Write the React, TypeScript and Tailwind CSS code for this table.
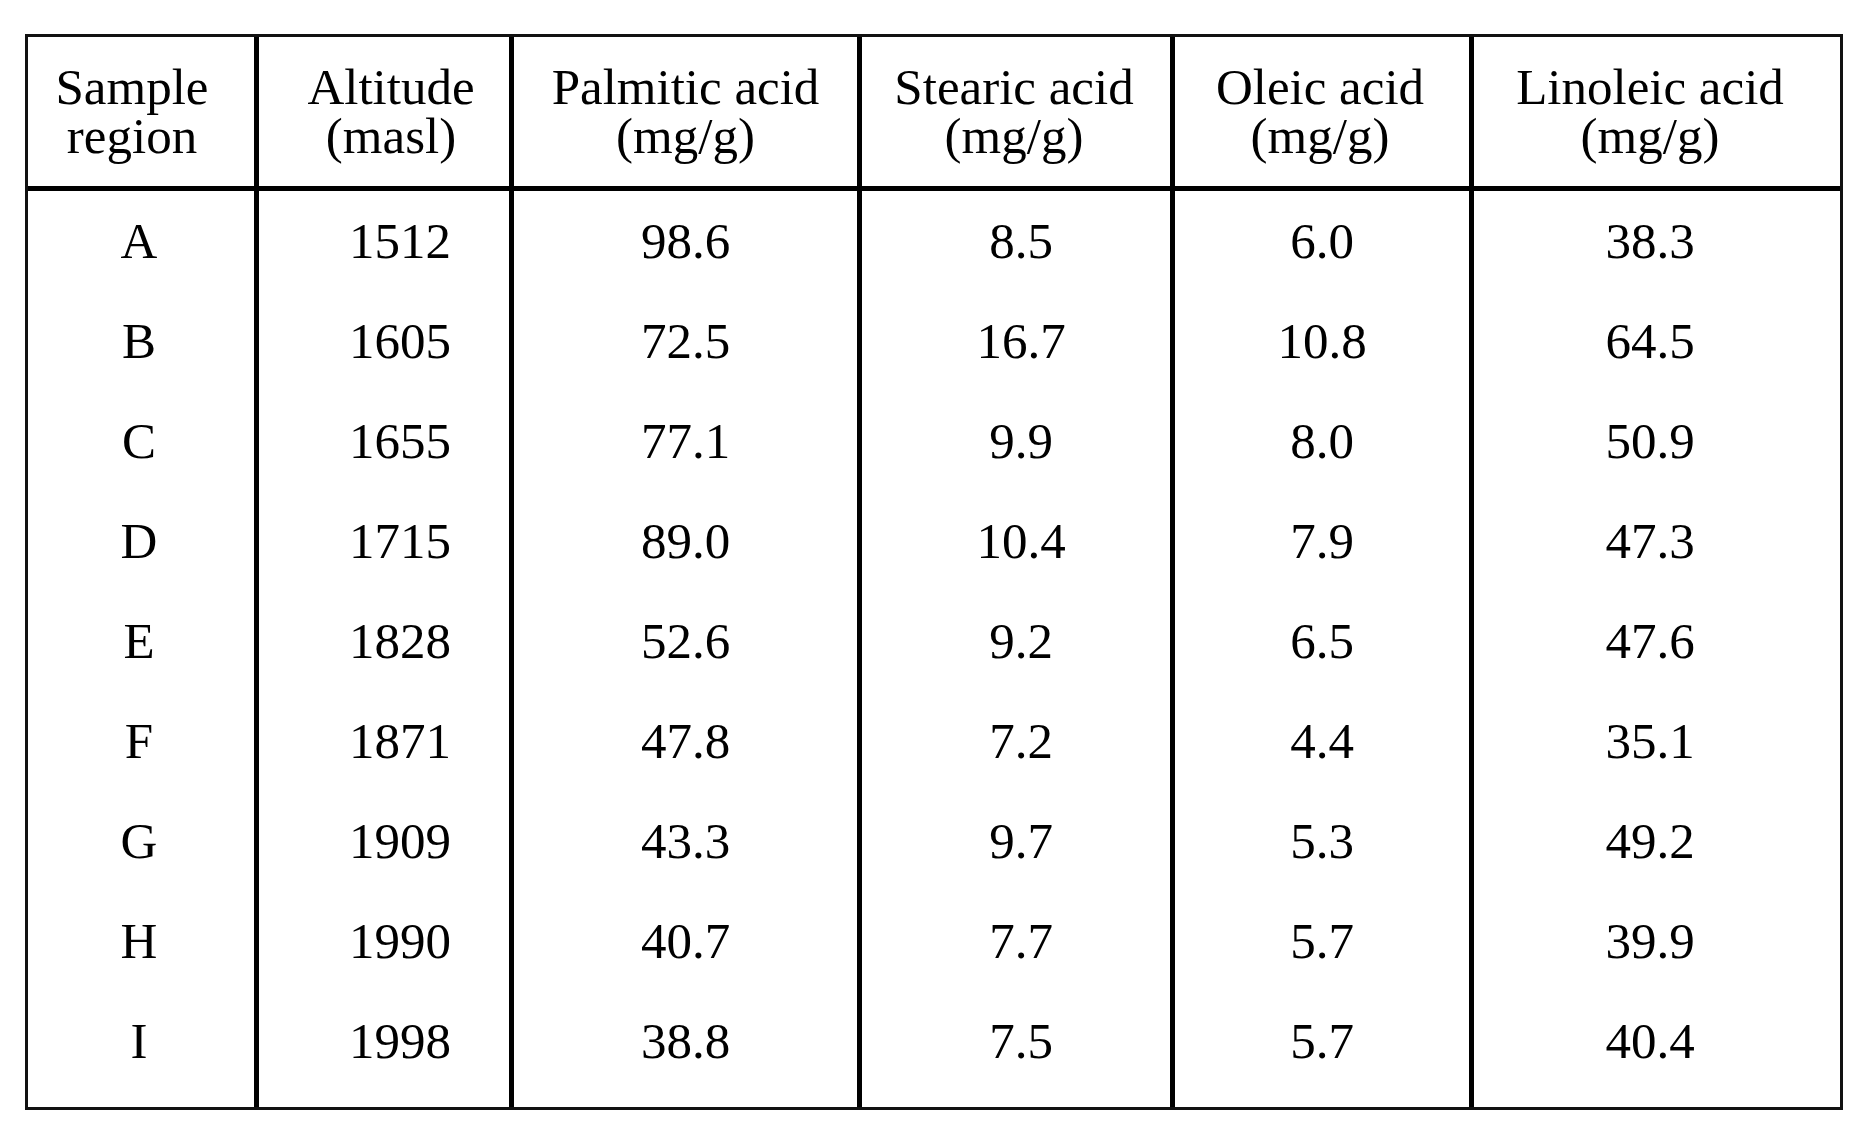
const headers = [
  ["Sample", "region"],
  ["Altitude", "(masl)"],
  ["Palmitic acid", "(mg/g)"],
  ["Stearic acid", "(mg/g)"],
  ["Oleic acid", "(mg/g)"],
  ["Linoleic acid", "(mg/g)"],
];

const rows = [
  ["A", "1512", "98.6", "8.5", "6.0", "38.3"],
  ["B", "1605", "72.5", "16.7", "10.8", "64.5"],
  ["C", "1655", "77.1", "9.9", "8.0", "50.9"],
  ["D", "1715", "89.0", "10.4", "7.9", "47.3"],
  ["E", "1828", "52.6", "9.2", "6.5", "47.6"],
  ["F", "1871", "47.8", "7.2", "4.4", "35.1"],
  ["G", "1909", "43.3", "9.7", "5.3", "49.2"],
  ["H", "1990", "40.7", "7.7", "5.7", "39.9"],
  ["I", "1998", "38.8", "7.5", "5.7", "40.4"],
];

// column widths include the 5px left divider for every column but the first
const cols = ["w-[226px]", "w-[255px]", "w-[348px]", "w-[313px]", "w-[299px]", "w-[371px]"];
const headPad = ["pr-[18px]", "pl-[14px]", "", "pr-[4px]", "pr-[4px]", "pr-[14px]"];
const bodyPad = ["pr-[4px]", "pl-[32px]", "", "pl-[10px]", "", "pr-[14px]"];

export default function App() {
  return (
    <div className="min-h-[1134px] w-[1872px] bg-white pl-[25px] pt-[34px] font-['Liberation_Serif','Times_New_Roman',serif] text-[51px] text-black">
      <div className="flex w-[1818px] flex-col border-[3px] border-[#111]">
        <div className="flex h-[154px] border-b-[5px] border-black">
          {headers.map((h, i) => (
            <div
              key={i}
              className={`${cols[i]} ${headPad[i]} ${i > 0 ? "border-l-[5px] border-black" : ""} flex flex-col items-center justify-center text-center leading-[49px]`}
            >
              <span>{h[0]}</span>
              <span>{h[1]}</span>
            </div>
          ))}
        </div>
        <div className="flex">
          {cols.map((w, i) => (
            <div
              key={i}
              className={`${w} ${bodyPad[i]} ${i > 0 ? "border-l-[5px] border-black" : ""} flex flex-col items-center pb-[16px]`}
            >
              {rows.map((r) => (
                <div key={r[0]} className="h-[100px] leading-[100px]">
                  {r[i]}
                </div>
              ))}
            </div>
          ))}
        </div>
      </div>
    </div>
  );
}
